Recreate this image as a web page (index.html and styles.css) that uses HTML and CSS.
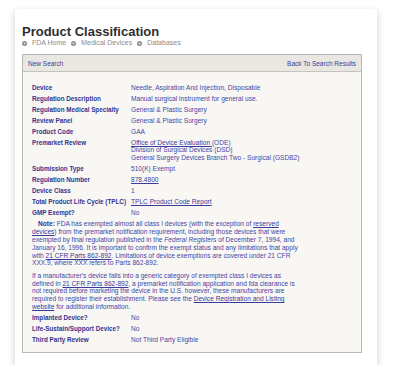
FILE: index.html
```html
<!DOCTYPE html>
<html lang="en">
<head>
  <meta charset="UTF-8" />
  <meta name="viewport" content="width=device-width, initial-scale=1.0" />
  <title>Product Classification</title>
  <link rel="stylesheet" href="styles.css">
</head>
<body>
  <div class="page-card">
    <h1 class="page-title">Product Classification</h1>
    <ul class="crumbs">
      <li>FDA Home</li>
      <li>Medical Devices</li>
      <li>Databases</li>
    </ul>

    <div class="panel">
      <div class="panel-bar">
        <a href="#">New Search</a>
        <a href="#">Back To Search Results</a>
      </div>
      <div class="panel-body">
        <table class="details">
          <tr><th>Device</th><td>Needle, Aspiration And Injection, Disposable</td></tr>
          <tr><th>Regulation Description</th><td>Manual surgical instrument for general use.</td></tr>
          <tr><th>Regulation Medical Specialty</th><td>General &amp; Plastic Surgery</td></tr>
          <tr><th>Review Panel</th><td>General &amp; Plastic Surgery</td></tr>
          <tr><th>Product Code</th><td>GAA</td></tr>
          <tr>
            <th>Premarket Review</th>
            <td><a href="#">Office of Device Evaluation </a>(ODE)<br>Division of Surgical Devices (DSD)<br>General Surgery Devices Branch Two - Surgical (GSDB2)</td>
          </tr>
          <tr><th>Submission Type</th><td>510(K) Exempt</td></tr>
          <tr><th>Regulation Number</th><td><a href="#">878.4800</a></td></tr>
          <tr><th>Device Class</th><td>1</td></tr>
          <tr><th>Total Product Life Cycle (TPLC)</th><td><a href="#">TPLC Product Code Report</a></td></tr>
          <tr><th>GMP Exempt?</th><td>No</td></tr>
          <tr>
            <td colspan="2" class="notes">
              <p class="note"><b>Note:</b> FDA has exempted almost all class I devices (with the exception of <a href="#">reserved devices</a>) from the premarket notification requirement, including those devices that were exempted by final regulation published in the <i>Federal Registers</i> of December 7, 1994, and January 16, 1996. It is important to confirm the exempt status and any limitations that apply with <a href="#">21 CFR Parts 862-892</a>. Limitations of device exemptions are covered under 21 CFR XXX.9, where XXX refers to Parts 862-892.</p>
              <p>If a manufacturer's device falls into a generic category of exempted class I devices as defined in <a href="#">21 CFR Parts 862-892</a>, a premarket notification application and fda clearance is not required before marketing the device in the U.S. however, these manufacturers are required to register their establishment. Please see the <a href="#">Device Registration and Listing website</a> for additional information.</p>
            </td>
          </tr>
          <tr><th>Implanted Device?</th><td>No</td></tr>
          <tr><th>Life-Sustain/Support Device?</th><td>No</td></tr>
          <tr><th>Third Party Review</th><td>Not Third Party Eligible</td></tr>
        </table>
      </div>
    </div>
  </div>
</body>
</html>
```

FILE: styles.css
```css
* {
  margin: 0;
  padding: 0;
  box-sizing: border-box;
}

body {
  background: #fff;
  font-family: 'Liberation Sans', Arial, sans-serif;
}

.page-card {
  width: 362px;
  margin: 9px 0 0 15px;
  padding: 15px 15px 12px 7px;
  background: #fff;
  box-shadow: 0 3px 8px rgba(0,0,0,0.2);
}

.page-title {
  font-size: 13px;
  line-height: 15px;
  font-weight: bold;
  color: #2f2f2f;
}

.crumbs {
  display: flex;
  gap: 5px;
  list-style: none;
  margin-bottom: 7px;
  font-size: 7px;
  line-height: 8px;
  color: #8a8a8a;
}

.crumbs li {
  display: flex;
  align-items: center;
  gap: 5px;
}

.crumbs li::before {
  content: "";
  width: 5px;
  height: 5px;
  border-radius: 50%;
  background: radial-gradient(circle, #d8d8d8 0 0.8px, #8c8c8c 1.2px);
}

.panel {
  width: 340px;
  border: 1px solid #b9b9b4;
  background: #f8f7f3;
}

.panel-bar {
  display: flex;
  justify-content: space-between;
  align-items: center;
  height: 17px;
  padding: 0 5px 0 5px;
  background: #e8e7e1;
  border-bottom: 1px solid #c4c3bd;
  font-size: 6.5px;
}

.panel-bar a {
  color: #3d3d9e;
  text-decoration: none;
}

.panel-body {
  padding: 10px 9px 6px 9px;
}

.details {
  border-collapse: collapse;
  font-size: 6.6px;
  line-height: 7.8px;
  color: #4646a6;
}

.details th,
.details td {
  padding: 1.6px 0;
  text-align: left;
  vertical-align: top;
}

.details th {
  width: 99px;
  font-size: 6.3px;
  font-weight: bold;
  color: #33338f;
  white-space: nowrap;
}

.details a {
  color: #3a3a9a;
  text-decoration: underline;
}

.details .notes {
  padding: 2px 0;
}

.notes p {
  width: 272px;
}

.notes p + p {
  margin-top: 4.6px;
}

.notes .note {
  text-indent: 6px;
}

.notes b {
  color: #33338f;
}
```
